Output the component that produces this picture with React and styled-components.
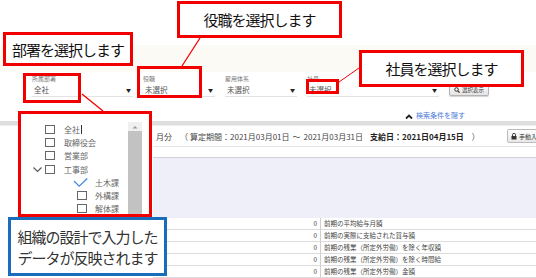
import React from 'react';
import styled, { createGlobalStyle } from 'styled-components';

const GlobalStyle = createGlobalStyle`
  html, body {
    margin: 0;
    padding: 0;
    background: #fff;
  }
  body {
    width: 536px;
    height: 278px;
    overflow: hidden;
    font-family: "Noto Sans CJK JP", "Noto Sans", sans-serif;
  }
`;

const Page = styled.div`
  position: relative;
  width: 536px;
  height: 278px;
  overflow: hidden;
  background: #fff;
  color: #444;
`;

const TopSpace = styled.div`
  height: 45px;
`;

const HeaderBand = styled.div`
  height: 27px;
  background: #fcfaf4;
`;

const FilterBar = styled.div`
  display: flex;
  align-items: flex-end;
  gap: 10px;
  padding: 3px 0 0 32px;
`;

const Field = styled.div`
  width: ${p => p.$w}px;
  display: flex;
  flex-direction: column;
`;

const FieldLabel = styled.div`
  height: 8px;
  font-size: 6px;
  line-height: 8px;
  color: #777;
`;

const FieldValue = styled.div`
  height: 13px;
  display: flex;
  align-items: center;
  justify-content: space-between;
  padding: 0 2px;
  border-bottom: 1px solid #e2e2e2;
  font-size: 7.5px;
  color: #555;
`;

const Caret = styled.span`
  font-size: 5px;
  color: #222;
`;

const SearchButton = styled.div`
  width: 40px;
  height: 13px;
  box-sizing: border-box;
  margin-bottom: 1px;
  display: flex;
  align-items: center;
  justify-content: center;
  gap: 2px;
  border: 1px solid #b4b4b4;
  border-radius: 2px;
  background: linear-gradient(#fdfdfd, #e4e4e4);
  box-shadow: 0 1px 1px rgba(0, 0, 0, 0.18);
  font-size: 5.5px;
  color: #333;
`;

const HideRow = styled.div`
  height: 24px;
  box-sizing: border-box;
  display: flex;
  align-items: flex-end;
  justify-content: flex-end;
  padding: 0 71px 1px 0;
  gap: 3px;
`;

const HideLink = styled.span`
  font-size: 7px;
  line-height: 10px;
  color: #4a7bd8;
`;

const Divider = styled.div`
  height: 4px;
  background: #dedede;
  border-bottom: 1px solid #efefef;
`;

const Body = styled.div`
  display: grid;
  grid-template-columns: 153px 1fr;
`;

const Panel = styled.div`
  overflow: hidden;
`;

const PeriodRow = styled.div`
  height: 20px;
  display: flex;
  align-items: center;
  padding-left: 3px;
  border-bottom: 1px solid #e4e4e4;
  font-size: 8px;
  color: #444;
  white-space: nowrap;
`;

const Seg = styled.span`
  margin-left: ${p => p.$ml || 0}px;
  font-weight: ${p => (p.$bold ? 700 : 400)};
  color: ${p => (p.$bold ? '#222' : '#444')};
`;

const ManualButton = styled.div`
  flex-shrink: 0;
  margin-left: auto;
  margin-right: -15px;
  width: 44px;
  height: 14px;
  box-sizing: border-box;
  display: flex;
  align-items: center;
  gap: 2px;
  padding-left: 3px;
  border: 1px solid #bbb;
  border-radius: 2px;
  background: linear-gradient(#fefefe, #e8e8e8);
  font-size: 6px;
  color: #333;
`;

const Spacer = styled.div`
  height: 10px;
  border-bottom: 1px solid #cfd0dc;
`;

const Lavender = styled.div`
  height: 60px;
  background: #efeff9;
`;

const DataRow = styled.div`
  display: grid;
  grid-template-columns: 168px 1fr;
  height: 12px;
  box-sizing: border-box;
  border-bottom: 1px solid #dcdcdc;
  font-size: 6.5px;
  line-height: 11px;
  color: #444;
  white-space: nowrap;
`;

const NumCell = styled.div`
  text-align: right;
  padding-right: 3px;
  border-right: 1px solid #cfcfcf;
`;

const TextCell = styled.div`
  padding-left: 3px;
`;

/* dropdown tree over the content */
const TreeMenu = styled.div`
  position: absolute;
  left: 18px;
  top: 111px;
  width: 134px;
  height: 106px;
  box-sizing: border-box;
  border: 3px solid #f20000;
  background: #fff;
  display: flex;
  overflow: hidden;
`;

const TreeList = styled.div`
  flex: 1;
  padding-top: 9px;
`;

const TreeRow = styled.div`
  height: 13.2px;
  display: flex;
  align-items: center;
  padding-left: ${p => 10 + p.$level * 32}px;
  font-size: 8px;
  color: #666;
`;

const Toggle = styled.span`
  width: 12px;
  height: 12px;
  margin-right: 2px;
  display: flex;
`;

const CheckBox = styled.span`
  width: 10px;
  height: 9px;
  box-sizing: border-box;
  border: 1px solid #666;
  flex-shrink: 0;
`;

const CheckSlot = styled.span`
  width: 10px;
  height: 10px;
  flex-shrink: 0;
  display: flex;
`;

const TreeText = styled.span`
  margin-left: ${p => p.$ml}px;
  display: flex;
  align-items: center;
`;

const TextCaret = styled.span`
  width: 1px;
  height: 9px;
  margin-left: 1px;
  background: #333;
`;

const ScrollBar = styled.div`
  width: 14px;
  margin: 8px 7px 0 0;
  display: flex;
  flex-direction: column;
`;

const ScrollUp = styled.div`
  height: 9px;
  background: #f0f0f0;
  display: flex;
  align-items: center;
  justify-content: center;
`;

const ScrollThumb = styled.div`
  flex: 1;
  background: #c2c2c2;
`;

/* annotations */
const Callout = styled.div`
  position: absolute;
  left: ${p => p.$x}px;
  top: ${p => p.$y}px;
  width: ${p => p.$w}px;
  height: ${p => p.$h}px;
  box-sizing: border-box;
  border: 3px solid ${p => (p.$blue ? '#1a6dbb' : '#f20000')};
  background: #fff;
  display: flex;
  flex-direction: column;
  align-items: center;
  justify-content: center;
  font-size: 15px;
  line-height: 21px;
  letter-spacing: -1px;
  color: ${p => (p.$blue ? '#333' : '#111')};
  white-space: nowrap;
`;

const Highlight = styled.div`
  position: absolute;
  left: ${p => p.$x}px;
  top: ${p => p.$y}px;
  width: ${p => p.$w}px;
  height: ${p => p.$h}px;
  box-sizing: border-box;
  border: 3px solid #f20000;
`;

const Leaders = styled.svg`
  position: absolute;
  left: 0;
  top: 0;
  pointer-events: none;
`;

const fields = [
  { w: 101, label: '所属部署', value: '全社' },
  { w: 72, label: '役職', value: '未選択' },
  { w: 72, label: '雇用体系', value: '未選択' },
  { w: 132, label: '社員', value: '未選択' },
];

const rows = [
  '前期の平均給与月額',
  '前期の実際に支給された賞与額',
  '前期の残業（所定外労働）を除く年収額',
  '前期の残業（所定外労働）を除く時間給',
  '前期の残業（所定外労働）金額',
];

const tree = [
  { level: 0, label: '全社', caret: true },
  { level: 0, label: '取締役会' },
  { level: 0, label: '営業部' },
  { level: 0, label: '工事部', open: true },
  { level: 1, label: '土木課', checked: true },
  { level: 1, label: '外構課' },
  { level: 1, label: '解体課' },
];

function Chevron() {
  return (
    <svg width="12" height="12" viewBox="0 0 12 12">
      <path d="M2.5 4.5 L6.5 8.5 L10.5 4.5" fill="none" stroke="#555" strokeWidth="1.1" />
    </svg>
  );
}

function Tick() {
  return (
    <svg width="10" height="10" viewBox="0 0 10 10" style={{ overflow: 'visible' }}>
      <path d="M-3 4 L2.2 9.2 L10.3 1.5" fill="none" stroke="#4a88e6" strokeWidth="1.3" />
    </svg>
  );
}

function App() {
  return (
    <Page>
      <GlobalStyle />
      <TopSpace />
      <HeaderBand />

      <FilterBar>
        {fields.map(f => (
          <Field key={f.label} $w={f.w}>
            <FieldLabel>{f.label}</FieldLabel>
            <FieldValue>
              <span>{f.value}</span>
              <Caret>▼</Caret>
            </FieldValue>
          </Field>
        ))}
        <SearchButton>
          <svg width="6" height="6" viewBox="0 0 6 6">
            <circle cx="2.5" cy="2.5" r="1.8" fill="none" stroke="#333" strokeWidth="1" />
            <path d="M3.8 3.8 L5.6 5.6" stroke="#333" strokeWidth="1.2" />
          </svg>
          選択表示
        </SearchButton>
      </FilterBar>

      <HideRow>
        <svg width="8" height="7" viewBox="0 0 8 7">
          <path d="M1 5.5 L4 2.5 L7 5.5" fill="none" stroke="#222" strokeWidth="1.8" />
        </svg>
        <HideLink>検索条件を隠す</HideLink>
      </HideRow>

      <Divider />

      <Body>
        <div />
        <Panel>
          <PeriodRow>
            <Seg>月分</Seg>
            <Seg $ml={8}>（</Seg>
            <Seg $ml={2}>算定期間：2021月03月01日</Seg>
            <Seg $ml={3}>～</Seg>
            <Seg $ml={3}>2021月03月31日</Seg>
            <Seg $ml={7} $bold>支給日：2021日04月15日</Seg>
            <Seg $ml={8}>）</Seg>
            <ManualButton>
              <svg width="6" height="7" viewBox="0 0 6 7">
                <rect x="0.5" y="3" width="5" height="3.5" fill="#333" />
                <path d="M1.5 3 V1.8 A1.5 1.5 0 0 1 4.5 1.8 V3" fill="none" stroke="#333" strokeWidth="0.9" />
              </svg>
              手動入力
            </ManualButton>
          </PeriodRow>
          <Spacer />
          <Lavender />
          {rows.map(r => (
            <DataRow key={r}>
              <NumCell>0</NumCell>
              <TextCell>{r}</TextCell>
            </DataRow>
          ))}
        </Panel>
      </Body>

      <TreeMenu>
        <TreeList>
          {tree.map(t => (
            <TreeRow key={t.label} $level={t.level}>
              <Toggle>{t.open && <Chevron />}</Toggle>
              {t.checked ? (
                <CheckSlot>
                  <Tick />
                </CheckSlot>
              ) : (
                <CheckBox />
              )}
              <TreeText $ml={t.level ? 8 : 9}>
                {t.label}
                {t.caret && <TextCaret />}
              </TreeText>
            </TreeRow>
          ))}
        </TreeList>
        <ScrollBar>
          <ScrollUp>
            <svg width="6" height="4" viewBox="0 0 6 4">
              <path d="M0.5 3.5 L3 1 L5.5 3.5 Z" fill="#999" />
            </svg>
          </ScrollUp>
          <ScrollThumb />
        </ScrollBar>
      </TreeMenu>

      <Highlight $x={23} $y={73} $w={58} $h={30} />
      <Highlight $x={137} $y={66} $w={65} $h={32} />
      <Highlight $x={306} $y={79} $w={33} $h={15} />

      <Leaders width="536" height="278">
        <line x1="82" y1="94" x2="103" y2="111" stroke="#f20000" strokeWidth="1.3" />
        <line x1="200" y1="38" x2="182" y2="66" stroke="#f20000" strokeWidth="1.3" />
        <line x1="359" y1="68" x2="339" y2="82" stroke="#f20000" strokeWidth="1" />
      </Leaders>

      <Callout $x={3} $y={32} $w={130} $h={34}>部署を選択します</Callout>
      <Callout $x={177} $y={1} $w={165} $h={37}>役職を選択します</Callout>
      <Callout $x={359} $y={50} $w={165} $h={37}>社員を選択します</Callout>
      <Callout $x={8} $y={217} $w={159} $h={59} $blue>
        <span>組織の設計で入力した</span>
        <span>データが反映されます</span>
      </Callout>
    </Page>
  );
}

export default App;
